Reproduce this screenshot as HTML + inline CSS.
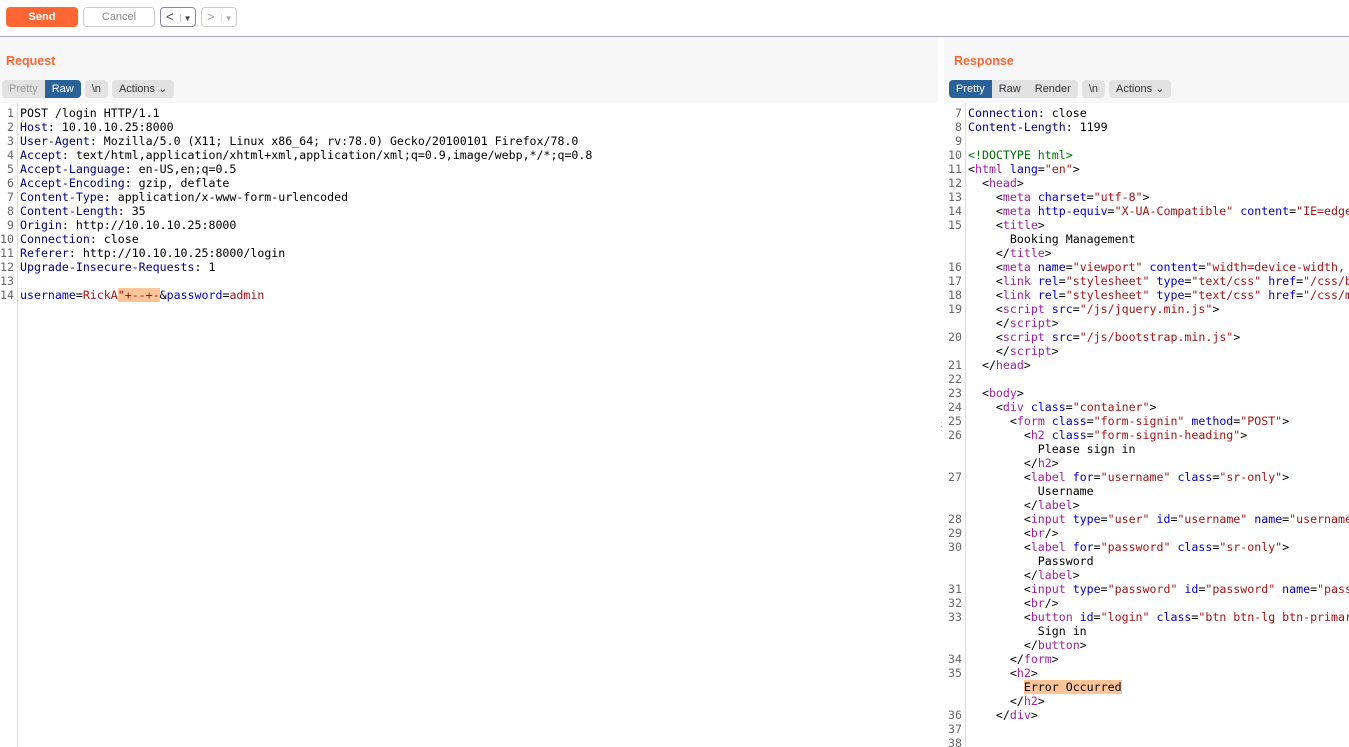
<!DOCTYPE html>
<html><head><meta charset="utf-8"><style>
*{margin:0;padding:0;box-sizing:border-box}
body{width:1349px;height:747px;overflow:hidden;background:#fff;font-family:"Liberation Sans",sans-serif;position:relative}
.top{position:absolute;left:0;top:0;width:1349px;height:37px;background:#fff;border-bottom:1px solid #a9a3b8}
.btn{position:absolute;top:7px;height:20px;border-radius:4px;font-size:11px;text-align:center;line-height:18px}
.panel{position:absolute;top:37px;height:66px;background:#f7f7f7}
.title{position:absolute;top:17px;color:#ff6633;font-weight:bold;font-size:12.5px}
.tabs{position:absolute;top:43px;height:18px;display:flex;gap:4px;font-size:11px}
.grp{display:flex;background:#e2e2e2;border-radius:4px;overflow:hidden}
.grp span{padding:0 7px;line-height:18px;color:#333}
.grp .on{background:#2a6199;color:#fff}
.ed{position:absolute;top:103px;bottom:0;background:#fff;overflow:hidden}
pre{font-family:"DejaVu Sans Mono",monospace;font-size:11.6px;line-height:14px;position:absolute;top:3px;color:#000;white-space:pre}
.gut{position:absolute;top:0;bottom:0;border-right:1px solid #ddd}
.ln{color:#666;text-align:right}
.h{color:#000080}.t{color:#a020a0}.a{color:#0000c8}.v{color:#a31515}.d{color:#007000}.r{color:#a31515}
.hl{background:#ffc599}
</style></head><body>
<div class="top">
<div class="btn" style="left:6px;width:72px;background:#ff6633;color:#fff;font-weight:bold;line-height:20px">Send</div>
<div class="btn" style="left:83px;width:72px;border:1px solid #ccc;color:#888">Cancel</div>
<div class="btn" style="left:160px;width:36px;border:1px solid #8a86a0;color:#444;font-size:13px;text-align:left;padding-left:5px">&lt;<span style="font-size:8px;margin-left:6px;border-left:1px solid #ccc;padding-left:3px">▼</span></div>
<div class="btn" style="left:201px;width:36px;border:1px solid #ccc;color:#aaa;font-size:13px;text-align:left;padding-left:5px">&gt;<span style="font-size:8px;margin-left:6px;border-left:1px solid #ddd;padding-left:3px">▼</span></div>
</div>
<div class="panel" style="left:0;width:938px">
<div class="title" style="left:6px">Request</div>
<div class="tabs" style="left:2px"><div class="grp"><span style="color:#999">Pretty</span><span class="on">Raw</span></div><div class="grp"><span>\n</span></div><div class="grp"><span>Actions ⌄</span></div></div>
</div>
<div class="panel" style="left:944px;width:405px">
<div class="title" style="left:10px">Response</div>
<div class="tabs" style="left:5px"><div class="grp"><span class="on">Pretty</span><span>Raw</span><span>Render</span></div><div class="grp"><span>\n</span></div><div class="grp"><span>Actions ⌄</span></div></div>
</div>
<div class="ed" style="left:0;width:938px">
<div class="gut" style="left:0;width:18px"></div>
<pre class="ln" style="left:0;width:14px">1
2
3
4
5
6
7
8
9
10
11
12
13
14</pre>
<pre style="left:20px">POST /login HTTP/1.1
<span class="h">Host</span>: 10.10.10.25:8000
<span class="h">User-Agent</span>: Mozilla/5.0 (X11; Linux x86_64; rv:78.0) Gecko/20100101 Firefox/78.0
<span class="h">Accept</span>: text/html,application/xhtml+xml,application/xml;q=0.9,image/webp,*/*;q=0.8
<span class="h">Accept-Language</span>: en-US,en;q=0.5
<span class="h">Accept-Encoding</span>: gzip, deflate
<span class="h">Content-Type</span>: application/x-www-form-urlencoded
<span class="h">Content-Length</span>: 35
<span class="h">Origin</span>: http://10.10.10.25:8000
<span class="h">Connection</span>: close
<span class="h">Referer</span>: http://10.10.10.25:8000/login
<span class="h">Upgrade-Insecure-Requests</span>: 1

<span class="a">username</span>=<span class="r">RickA</span><span class="hl r">"+--+-</span>&amp;<span class="a">password</span>=<span class="r">admin</span></pre>
</div>
<div style="position:absolute;left:940px;top:421px;color:#999;font-size:8px;line-height:4px">·<br>·<br>·</div>
<div class="ed" style="left:944px;width:405px">
<div class="gut" style="left:0;width:22px"></div>
<pre class="ln" style="left:0;width:18px">7
8
9
10
11
12
13
14
15


16
17
18
19

20

21
22
23
24
25
26


27


28
29
30


31
32
33


34
35


36
37
38</pre>
<pre style="left:24px"><span class="h">Connection</span>: close
<span class="h">Content-Length</span>: 1199

<span class="d">&lt;!DOCTYPE html&gt;</span>
&lt;<span class="t">html</span> <span class="a">lang</span>=<span class="v">"en"</span>&gt;
  &lt;<span class="t">head</span>&gt;
    &lt;<span class="t">meta</span> <span class="a">charset</span>=<span class="v">"utf-8"</span>&gt;
    &lt;<span class="t">meta</span> <span class="a">http-equiv</span>=<span class="v">"X-UA-Compatible"</span> <span class="a">content</span>=<span class="v">"IE=edge"</span>&gt;
    &lt;<span class="t">title</span>&gt;
      Booking Management
    &lt;/<span class="t">title</span>&gt;
    &lt;<span class="t">meta</span> <span class="a">name</span>=<span class="v">"viewport"</span> <span class="a">content</span>=<span class="v">"width=device-width, initial"</span>
    &lt;<span class="t">link</span> <span class="a">rel</span>=<span class="v">"stylesheet"</span> <span class="a">type</span>=<span class="v">"text/css"</span> <span class="a">href</span>=<span class="v">"/css/bootstrap"</span>
    &lt;<span class="t">link</span> <span class="a">rel</span>=<span class="v">"stylesheet"</span> <span class="a">type</span>=<span class="v">"text/css"</span> <span class="a">href</span>=<span class="v">"/css/main"</span>
    &lt;<span class="t">script</span> <span class="a">src</span>=<span class="v">"/js/jquery.min.js"</span>&gt;
    &lt;/<span class="t">script</span>&gt;
    &lt;<span class="t">script</span> <span class="a">src</span>=<span class="v">"/js/bootstrap.min.js"</span>&gt;
    &lt;/<span class="t">script</span>&gt;
  &lt;/<span class="t">head</span>&gt;

  &lt;<span class="t">body</span>&gt;
    &lt;<span class="t">div</span> <span class="a">class</span>=<span class="v">"container"</span>&gt;
      &lt;<span class="t">form</span> <span class="a">class</span>=<span class="v">"form-signin"</span> <span class="a">method</span>=<span class="v">"POST"</span>&gt;
        &lt;<span class="t">h2</span> <span class="a">class</span>=<span class="v">"form-signin-heading"</span>&gt;
          Please sign in
        &lt;/<span class="t">h2</span>&gt;
        &lt;<span class="t">label</span> <span class="a">for</span>=<span class="v">"username"</span> <span class="a">class</span>=<span class="v">"sr-only"</span>&gt;
          Username
        &lt;/<span class="t">label</span>&gt;
        &lt;<span class="t">input</span> <span class="a">type</span>=<span class="v">"user"</span> <span class="a">id</span>=<span class="v">"username"</span> <span class="a">name</span>=<span class="v">"username"</span>
        &lt;<span class="t">br</span>/&gt;
        &lt;<span class="t">label</span> <span class="a">for</span>=<span class="v">"password"</span> <span class="a">class</span>=<span class="v">"sr-only"</span>&gt;
          Password
        &lt;/<span class="t">label</span>&gt;
        &lt;<span class="t">input</span> <span class="a">type</span>=<span class="v">"password"</span> <span class="a">id</span>=<span class="v">"password"</span> <span class="a">name</span>=<span class="v">"password"</span>
        &lt;<span class="t">br</span>/&gt;
        &lt;<span class="t">button</span> <span class="a">id</span>=<span class="v">"login"</span> <span class="a">class</span>=<span class="v">"btn btn-lg btn-primary"</span>
          Sign in
        &lt;/<span class="t">button</span>&gt;
      &lt;/<span class="t">form</span>&gt;
      &lt;<span class="t">h2</span>&gt;
        <span class="hl">Error Occurred</span>
      &lt;/<span class="t">h2</span>&gt;
    &lt;/<span class="t">div</span>&gt;

</pre>
</div>
</body></html>
